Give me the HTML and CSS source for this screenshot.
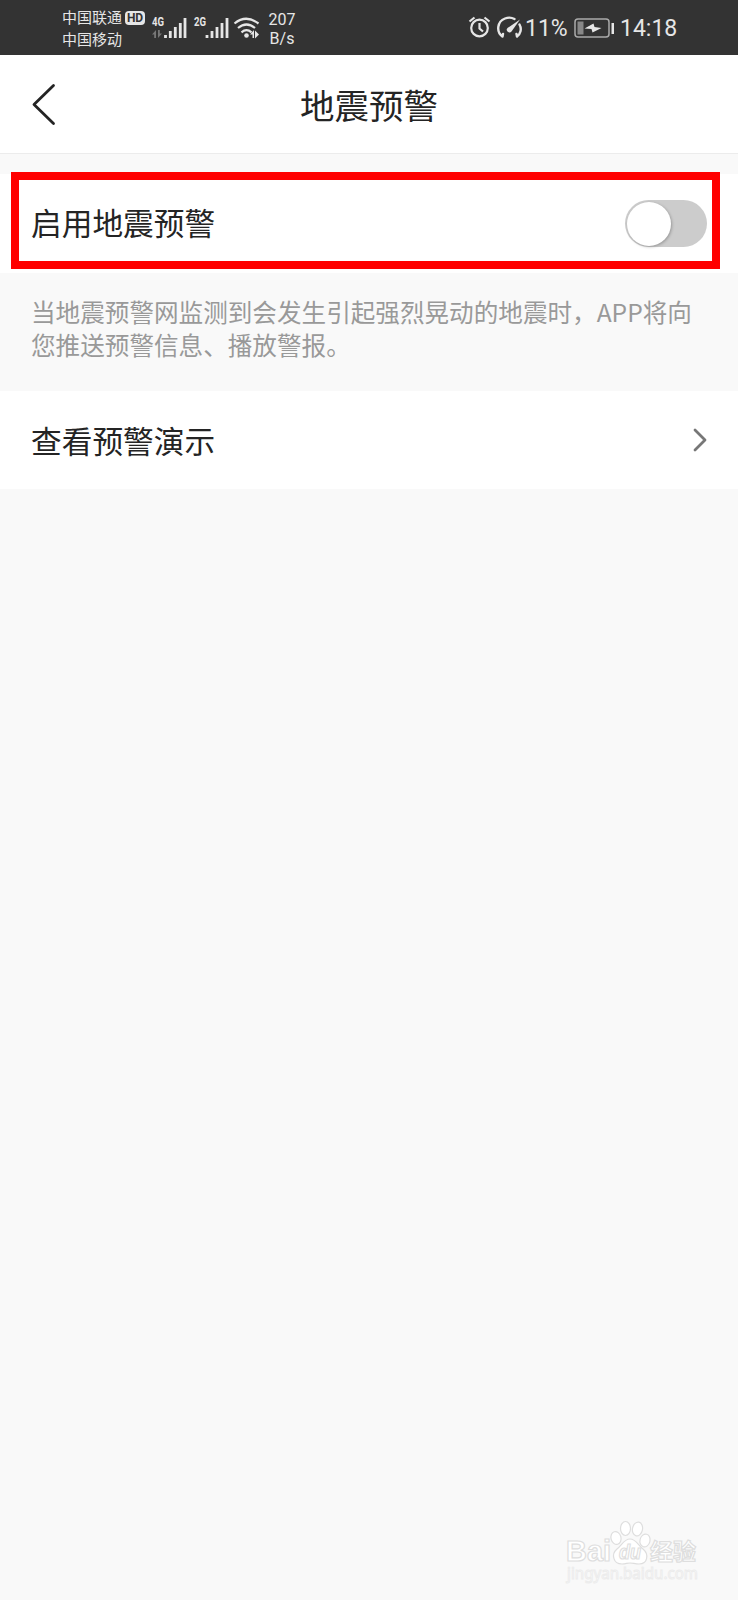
FILE: index.html
```html
<!DOCTYPE html>
<html lang="zh-CN">

<head>
    <meta charset="utf-8" />
    <title>地震预警</title>
    <link rel="stylesheet" href="styles.css">
</head>

<body>

    <div class="status">
        <div class="carriers">
            <div class="carrier">中国联通<span class="hd">HD</span></div>
            <div class="carrier">中国移动</div>
        </div>
        <svg class="signals" width="112" height="30" viewBox="0 0 112 30">
            <text class="net" x="0" y="12" textLength="12" lengthAdjust="spacingAndGlyphs">4G</text>
            <path class="dim" d="M0 20.500l4-4.500v8h-1.800v-3.500zM10 19.500l-4 4.500v-8h1.800v3.500z" />
            <path class="bar" d="M13.500 24v-3M18.300 24v-7M23.300 24v-11M28.300 24v-15M33 24v-20" />
            <text class="net" x="42" y="12" textLength="12" lengthAdjust="spacingAndGlyphs">2G</text>
            <path class="bar" d="M55 24v-3M60 24v-7M65 24v-11M70 24v-15M75 24v-20" />
            <path class="wave" d="M82.500 9.500Q94 0 106.500 9.500M86 14Q94.500 7 103 14M89.500 18.300Q94.500 14 99.500 18.300" />
            <circle class="fill" cx="94.500" cy="21.500" r="2.300" />
            <path class="fill" d="M98 20.500l4-4.500v8h-1.500v-3.500zM107 20.500l-4 4v-8z" />
        </svg>
        <div class="speed">207<br>B/s</div>
        <svg class="alarm" width="56" height="26" viewBox="0 0 56 26">
            <circle class="line" cx="11.500" cy="14" r="8.300" />
            <path class="line" d="M11.500 9v5.500l3.500 3M1.500 7.500l5-4M21.500 7.500l-5-4" />
            <path class="dial" d="M34.500 22.500C28 18 29 7.500 37 4.500Q42 2.500 46.500 5M51.500 10.500C54 15 52.500 20 49 22.500M34.500 22.500l.5-2.500M49 22.500l-.5-2.500" />
            <path class="fill" d="M52 5.500L43.500 17.500a2.600 2.600 0 0 1-4-3.500z" />
        </svg>
        <div class="percent">11%</div>
        <svg class="battery" width="42" height="22" viewBox="0 0 42 22">
            <rect class="shell" x="1" y="2" width="34" height="18" rx="3" />
            <rect class="level" x="3.500" y="4.500" width="6" height="13" />
            <path class="fill" d="M10.500 11.500l9-5 1 3.500 7 1-9 4.500-1-3.500zM37.500 6h2.500v11h-2.500z" />
        </svg>
        <div class="clock">14:18</div>
    </div>

    <div class="header">
        <svg class="back" width="24" height="42" viewBox="0 0 24 42">
            <path d="M21.500 2.500L2 21.500l19.500 19" />
        </svg>
        <h1>地震预警</h1>
    </div>

    <div class="row enable">
        <span class="label">启用地震预警</span>
        <div class="switch"><div class="knob"></div></div>
        <div class="highlight"></div>
    </div>

    <p class="note">当地震预警网监测到会发生引起强烈晃动的地震时，APP将向您推送预警信息、播放警报。</p>

    <div class="row demo">
        <span class="label">查看预警演示</span>
        <svg class="next" width="14" height="24" viewBox="0 0 14 24">
            <path d="M2 2l10 10L2 22" />
        </svg>
    </div>

    <svg class="watermark" width="140" height="70" viewBox="0 0 140 70">
        <text class="wm-name" x="0" y="40" textLength="45" lengthAdjust="spacingAndGlyphs">Bai</text>
        <g class="paw">
            <ellipse cx="50" cy="17" rx="5" ry="6.500" transform="rotate(-15 50 17)" />
            <ellipse cx="59.500" cy="7.500" rx="5" ry="7" />
            <ellipse cx="71.500" cy="8" rx="5" ry="7" transform="rotate(12 71.500 8)" />
            <ellipse cx="79" cy="19.500" rx="5" ry="6.500" transform="rotate(15 79 19.500)" />
            <path d="M64 18C58 18 56 24 51 28C45 33 47 43 56 43C60 43 61 42 64 42C67 42 69 43 73 43C82 43 83 33 77 28C72 24 70 18 64 18z" />
        </g>
        <text class="wm-du" x="53" y="38" textLength="22" lengthAdjust="spacingAndGlyphs">du</text>
        <text class="wm-cn" x="84" y="39" textLength="46" lengthAdjust="spacingAndGlyphs">经验</text>
        <text class="wm-url" x="1" y="58" textLength="131" lengthAdjust="spacingAndGlyphs">jingyan.baidu.com</text>
    </svg>

</body>

</html>
```

FILE: styles.css
```css
* {
    box-sizing: border-box;
}

body {
    margin: 0;
    height: 1600px;
    display: flex;
    flex-direction: column;
    overflow: hidden;
    background-color: #f9f9f9;
    color: #242424;
    font-family: "Noto Sans CJK SC", sans-serif;
}

svg {
    display: block;
    flex: none;
    overflow: visible;
}

/* status bar */
.status {
    height: 55px;
    flex: none;
    display: flex;
    align-items: flex-start;
    background-color: #333;
    color: #e6e6e6;
    font-family: Roboto, sans-serif;
}

.carriers {
    width: 90px;
    margin: 6px 0 0 62px;
    font-family: "Noto Sans CJK SC", sans-serif;
    font-size: 15px;
    line-height: 22px;
}

.carrier {
    display: flex;
    align-items: center;
    white-space: nowrap;
}

.hd {
    width: 20px;
    height: 14px;
    margin: 1px 0 0 3px;
    border-radius: 4px;
    background-color: #e6e6e6;
    color: #333;
    font: bold 12px/14px Roboto, sans-serif;
    text-align: center;
}

.signals {
    margin-top: 14px;
}

.net {
    fill: #e6e6e6;
    font: bold 13px Roboto, sans-serif;
}

.dim {
    fill: #777;
}

.bar {
    fill: none;
    stroke: #e6e6e6;
    stroke-width: 2.8;
}

.wave,
.line,
.dial {
    fill: none;
    stroke: #e6e6e6;
    stroke-width: 2.2;
}

.dial {
    stroke-width: 2.4;
    stroke-linecap: round;
}

.fill {
    fill: #e6e6e6;
}

.speed {
    width: 36px;
    margin: 10px 0 0;
    font-size: 16px;
    line-height: 19px;
    text-align: center;
}

.alarm {
    margin: 14px 0 0 168px;
}

.percent {
    width: 49px;
    margin: 15px 0 0 1px;
    font-size: 23px;
    line-height: 28px;
}

.battery {
    margin-top: 17px;
}

.shell {
    fill: none;
    stroke: #aaa;
    stroke-width: 1.5;
}

.level {
    fill: #888;
}

.clock {
    margin: 15px 0 0 4px;
    font-size: 23px;
    line-height: 28px;
}

/* title bar */
.header {
    height: 99px;
    flex: none;
    display: grid;
    grid-template-columns: 1fr auto 1fr;
    align-items: center;
    padding: 0 32px;
    background-color: white;
    border-bottom: 1px solid #ececec;
}

.header h1 {
    margin: 0;
    grid-column: 2;
    font-size: 34.5px;
    font-weight: normal;
    line-height: 50px;
}

.back path,
.next path {
    fill: none;
    stroke: #242424;
    stroke-width: 2.8;
    stroke-linecap: round;
    stroke-linejoin: round;
}

.next path {
    stroke: #777;
}

/* settings rows */
.row {
    position: relative;
    flex: none;
    display: flex;
    align-items: center;
    justify-content: space-between;
    padding: 0 31px 0 30px;
    background-color: white;
    font-size: 30.7px;
    line-height: 44px;
}

.label {
    padding-left: 1px;
}

.enable {
    height: 99px;
    margin-top: 20px;
}

.enable .label {
    margin-bottom: 3px;
}

.demo {
    height: 98px;
}

.switch {
    width: 82px;
    height: 47px;
    padding: 1.5px;
    border-radius: 24px;
    background-color: #ccc;
}

.knob {
    width: 44px;
    height: 44px;
    border-radius: 50%;
    background-color: white;
    box-shadow: 1px 1px 3px rgba(0, 0, 0, 0.25);
}

.highlight {
    position: absolute;
    left: 11px;
    top: -2px;
    width: 709px;
    height: 97px;
    border: 8px solid #f00;
}

.note {
    height: 118px;
    flex: none;
    margin: 0;
    padding: 22px 30px 0 31px;
    color: #999;
    font-size: 24.6px;
    line-height: 33px;
}

/* corner logo */
.watermark {
    margin: auto 32px 9px auto;
}

.watermark text,
.paw {
    fill: #fff;
    stroke: #dedede;
    stroke-width: 1.2;
}

.wm-name {
    font: bold 30px "Liberation Sans", sans-serif;
}

.wm-du {
    font: italic bold 20px "Liberation Sans", sans-serif;
}

.wm-cn {
    font: bold 23px "Noto Sans CJK SC", sans-serif;
}

.watermark .wm-url {
    font: 16px "Noto Sans", sans-serif;
    stroke: #ececec;
    stroke-width: 1;
}
```
